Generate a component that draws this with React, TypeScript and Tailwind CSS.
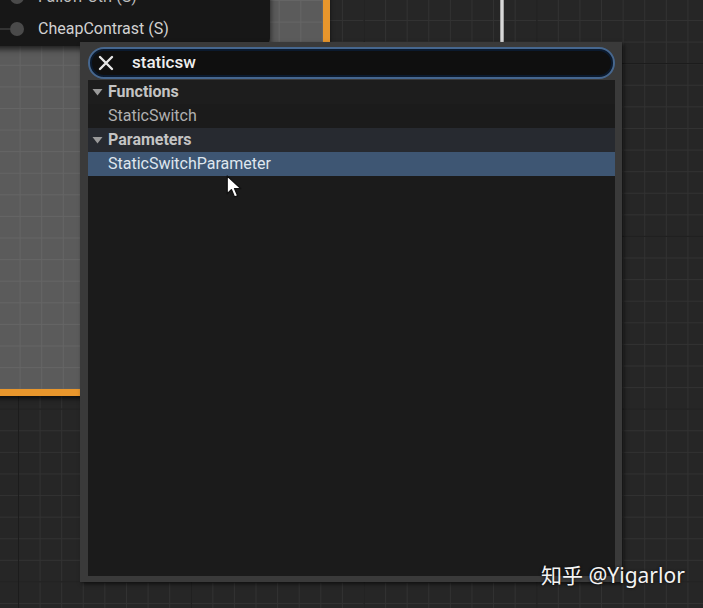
import React from 'react';

const gridBg =
    'bg-[linear-gradient(to_right,#1c1c1c_1px,transparent_1px),linear-gradient(to_bottom,#1c1c1c_1px,transparent_1px),linear-gradient(to_right,#323232_1px,transparent_1px),linear-gradient(to_bottom,#323232_1px,transparent_1px)] bg-[size:172.8px_172.8px,172.8px_172.8px,21.6px_21.6px,21.6px_21.6px] bg-[position:18px_63px,18px_63px,-3.6px_-1.6px,-3.6px_-1.6px]';

const commentBg =
    'bg-[linear-gradient(to_right,#656565_1px,transparent_1px),linear-gradient(to_bottom,#656565_1px,transparent_1px)] bg-[size:21.6px_21.6px] bg-[position:-3.6px_-1.6px]';

const Triangle: React.FC = () => (
    <svg width="11" height="8" viewBox="0 0 11 8" className="shrink-0">
        <path d="M0.5 1 L10.5 1 L5.5 7.5 Z" fill="#9a9a9a" />
    </svg>
);

const Cursor: React.FC = () => (
    <svg width="17" height="25" viewBox="0 0 16 24">
        <path
            d="M1 1 L1 18 L5 14 L8 21 L11 20 L8 13 L14 13 Z"
            fill="#ffffff"
            stroke="#111111"
            strokeWidth="1.2"
            strokeLinejoin="round"
        />
    </svg>
);

const App: React.FC = () => {
    const rows = [
        { type: 'header', label: 'Functions', bg: 'bg-[#1d1d1d]' },
        { type: 'item', label: 'StaticSwitch', bg: 'bg-[#1b1b1b]' },
        { type: 'header', label: 'Parameters', bg: 'bg-[#272a30]' },
        { type: 'item', label: 'StaticSwitchParameter', bg: 'bg-[#3e5673]', selected: true },
    ];

    return (
        <div
            className={`relative w-[703px] h-[608px] overflow-hidden bg-[#262626] ${gridBg}`}
            style={{ fontFamily: 'Roboto, "Liberation Sans", sans-serif' }}
        >
            {/* comment box (selected, orange outline) */}
            <div className={`absolute left-[-20px] top-[-20px] w-[350px] h-[416px] bg-[#5b5b5b] ${commentBg} border-r-[7px] border-b-[7px] border-[#e8962c] shadow-[0_3px_4px_rgba(0,0,0,0.6)]`} />

            {/* wire from above */}
            <div className="absolute left-[500px] top-0 w-[4px] h-[44px] bg-[linear-gradient(to_right,#8a8a8a,#f2f2f2,#8a8a8a)]" />

            {/* node */}
            <div className="absolute left-[-10px] top-[-40px] w-[280px] h-[86px] bg-[#171717] rounded-br-[8px] shadow-[0_3px_6px_rgba(0,0,0,0.7)] flex flex-col justify-end pb-[6px]">
                <div className="flex items-center h-[42px] text-[16px] text-[#bdbdbd]">
                    <div className="w-[20px] h-[2px] bg-[#333333]" />
                    <div className="w-[14px] h-[14px] rounded-full bg-[#4a4a4a]" />
                    <span className="ml-[14px]">Falloff Ctrl (S)</span>
                </div>
                <div className="flex items-center h-[22px] text-[16px] text-[#d2d2d2]">
                    <div className="w-[20px] h-[2px] bg-[#333333]" />
                    <div className="w-[14px] h-[14px] rounded-full bg-[#4a4a4a]" />
                    <span className="ml-[14px]">CheapContrast (S)</span>
                </div>
            </div>

            {/* search popup */}
            <div className="absolute left-[80px] top-[42px] w-[542px] h-[540px] bg-[#3a3a3a] pl-[8px] pr-[7px] pt-[5px] pb-[6px] flex flex-col shadow-[2px_2px_4px_rgba(0,0,0,0.6)]">
                <div className="h-[32px] shrink-0 rounded-full border-2 border-[#46678f] bg-[#0f0f0f] shadow-[inset_0_0_0_2px_#0b1a2e] flex items-center pl-[6px]">
                    <svg width="18" height="18" viewBox="0 0 18 18" className="ml-[1px]">
                        <path d="M3 3 L15 15 M15 3 L3 15" stroke="#e6e6e6" strokeWidth="2.4" strokeLinecap="round" />
                    </svg>
                    <span className="ml-[17px] text-[17px] font-medium text-[#eeeeee] leading-none -mt-[2px]">staticsw</span>
                </div>
                <div className="flex-1 bg-[#1b1b1b] mt-[1px] flex flex-col">
                    {rows.map((row) => (
                        <div key={row.label} className={`h-[24px] flex items-center ${row.bg}`}>
                            {row.type === 'header' ? (
                                <div className="flex items-center pl-[4px]">
                                    <Triangle />
                                    <span className="ml-[5px] text-[16px] font-bold text-[#c4c4c4]">{row.label}</span>
                                </div>
                            ) : (
                                <span className={`pl-[20px] text-[16px] ${row.selected ? 'text-[#dfe6ee]' : 'text-[#b0b0b0]'}`}>
                                    {row.label}
                                </span>
                            )}
                        </div>
                    ))}
                </div>
            </div>

            {/* mouse cursor */}
            <div className="absolute left-[226px] top-[175px]">
                <Cursor />
            </div>

            {/* watermark */}
            <div
                className="absolute left-[541px] top-[560px] text-[21px] leading-[30px] text-[#f4f4f4] [text-shadow:0_0_3px_rgba(0,0,0,0.8)]"
                style={{ fontFamily: '"Noto Sans", "Noto Sans CJK SC", sans-serif' }}
            >
                知乎 @Yigarlor
            </div>
        </div>
    );
};

export default App;
